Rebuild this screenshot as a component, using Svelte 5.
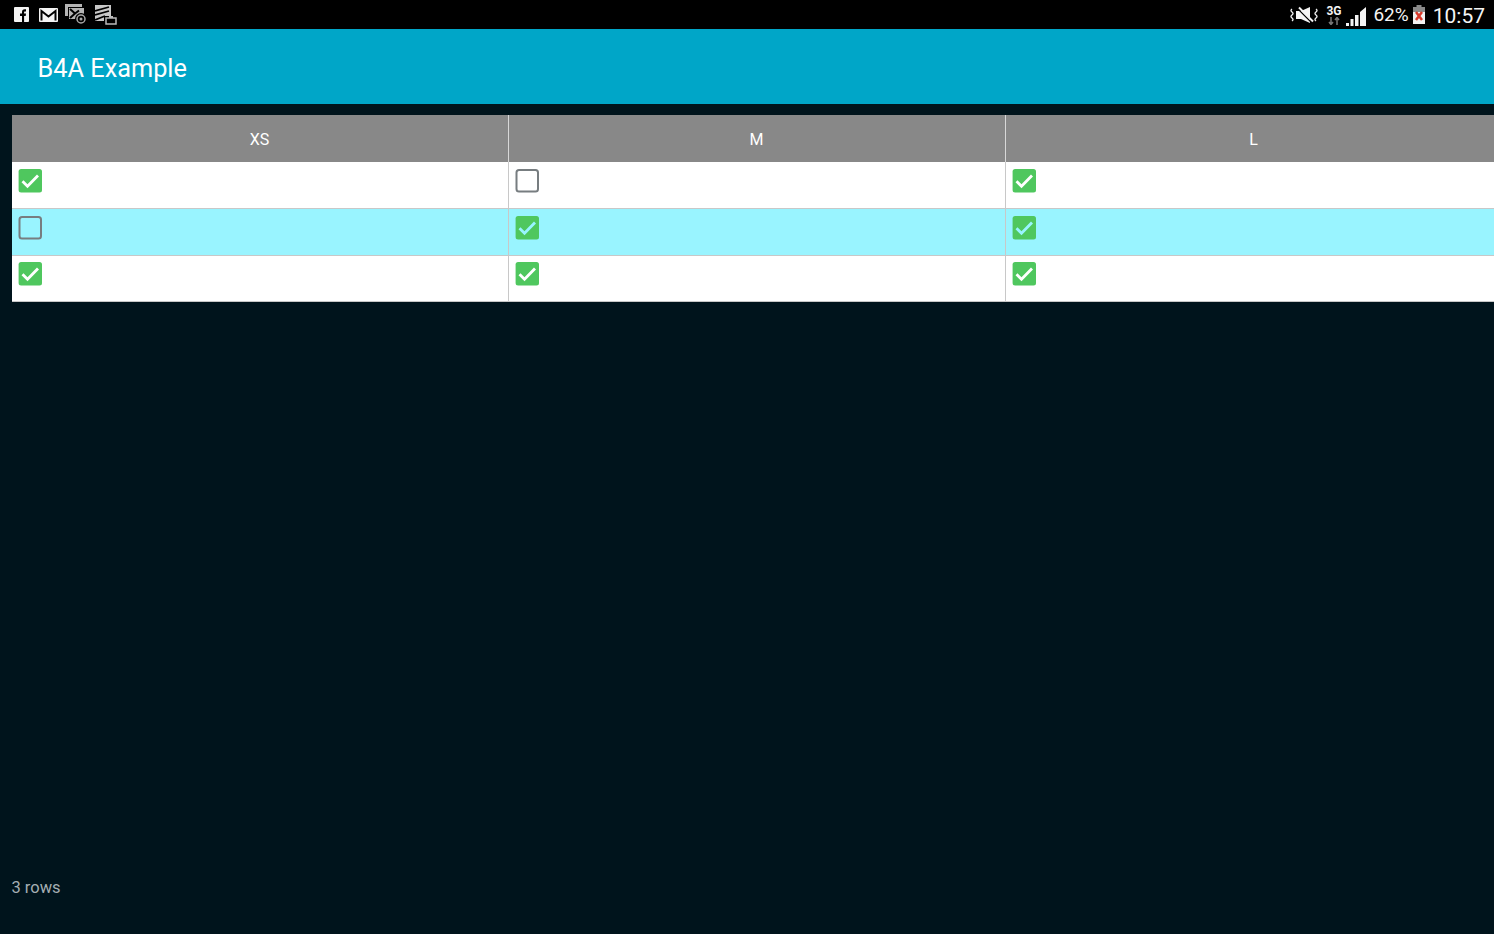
<script>
  const columns = ["XS", "M", "L"];
  const rows = [
    [true, false, true],
    [false, true, true],
    [true, true, true],
  ];
</script>

<div class="screen">
  <div class="status-bar">
    <div class="notif-icons">
      <svg class="fb" width="15" height="15" viewBox="0 0 15 15">
        <rect width="15" height="15" rx="1" fill="#f4f4f4" />
        <path d="M8 15V9H6V6.600h2V5c0-1.900 1-2.800 2.700-2.800h1.300v2.300h-1c-.7 0-.9.300-.9.900v1.200h1.900l-.3 2.400h-1.600v6z" fill="#000" />
      </svg>
      <svg class="mail" width="19" height="14" viewBox="0 0 19 14">
        <rect width="19" height="14" rx="1" fill="#f4f4f4" />
        <path d="M2.500 12.500V3l7 5.500 7-5.500v9.500" fill="none" stroke="#000" stroke-width="2" />
      </svg>
      <svg class="msg" width="22" height="21" viewBox="0 0 22 21">
        <path d="M0 0h17v3H3v9H0z" fill="#b5b5b5" />
        <rect x="4" y="4" width="15" height="11" fill="#b5b5b5" />
        <path d="M5 5l5 4.500 4-3M5 14l5-4.500" fill="none" stroke="#000" stroke-width="2" />
        <circle cx="16" cy="15" r="6" fill="#000" />
        <circle cx="16" cy="15" r="4" fill="none" stroke="#a8a8a8" stroke-width="1.500" />
        <circle cx="16" cy="15" r="1.500" fill="#a8a8a8" />
      </svg>
      <svg class="tasks" width="22" height="20" viewBox="0 0 22 20">
        <rect x="0" y="0" width="16" height="16" fill="#c8c8c8" />
        <path d="M0 6l14-4M0 10l14-4M0 15l10-4" stroke="#000" stroke-width="1.800" fill="none" />
        <rect x="9" y="11" width="13" height="9" fill="#000" />
        <rect x="11" y="13" width="10" height="6" fill="#000" stroke="#bbb" stroke-width="1.500" />
        <rect x="14" y="11" width="4" height="2" fill="#bbb" />
      </svg>
    </div>
    <div class="sys-icons">
      <svg class="mute" width="28" height="18" viewBox="0 0 28 18">
        <path d="M2 3q-2 1.500 0 3t0 3 0 3 0 3M26 3q2 1.500 0 3t0 3 0 3 0 3" fill="none" stroke="#eee" stroke-width="1.400" />
        <path d="M6 5h5l9-4v16L11 13H6z" fill="#f4f4f4" />
        <path d="M7 2l14 14" stroke="#000" stroke-width="1.300" />
        <path d="M9 1.500l14 14" stroke="#f4f4f4" stroke-width="2" />
      </svg>
      <div class="net">
        <span>3G</span>
        <svg width="14" height="8" viewBox="0 0 14 8">
          <path d="M4 0v7M2 5l2 2.500L6 5M10 8V1M8 3l2-2.500L12 3" fill="none" stroke="#777" stroke-width="1.500" />
        </svg>
      </div>
      <svg class="signal" width="20" height="19" viewBox="0 0 20 19">
        <path d="M0 19h3v-3H0zM4.500 19h3v-7h-3zM9 19h3.500V8H9zM14 19h6V0l-6 5z" fill="#f4f4f4" />
      </svg>
      <span class="pct">62%</span>
      <svg class="battery" width="12" height="19" viewBox="0 0 12 19">
        <rect x="3.500" y="0" width="5" height="3" fill="#8a8a8a" />
        <rect x="0" y="2" width="12" height="17" fill="#f2f2f2" />
        <rect x="0" y="2" width="12" height="5" fill="#8a8a8a" />
        <path d="M3 7l6 8M9 7l-6 8" stroke="#d9392b" stroke-width="2.500" />
      </svg>
      <span class="clock">10:57</span>
    </div>
  </div>

  <header class="toolbar">B4A Example</header>

  <main class="content">
    <div class="table">
      <div class="row head">
        {#each columns as col}
          <div class="cell">{col}</div>
        {/each}
      </div>
      {#each rows as row, i}
        <div class="row" class:odd={i % 2 === 1}>
          {#each row as checked}
            <div class="cell">
              {#if checked}
                <svg class="box" width="24" height="24" viewBox="0 0 24 24">
                  <rect x=".6" width="23.400" height="23.500" rx="2.500" fill="#4fc75e" />
                  <path class="tick" d="M4.500 12.300l5 5 10.500-10.800" fill="none" stroke-width="2.800" />
                </svg>
              {:else}
                <svg class="box" width="24" height="24" viewBox="0 0 24 24">
                  <rect x="1.500" y="1" width="21.500" height="21.500" rx="2.500" fill="none" stroke="#777d80" stroke-width="2" />
                </svg>
              {/if}
            </div>
          {/each}
        </div>
      {/each}
    </div>
    <div class="row-count">3 rows</div>
  </main>
</div>

<style>
  :global(body) {
    background: #00141c;
  }

  .screen {
    display: flex;
    flex-direction: column;
    height: 934px;
    overflow: hidden;
    font-family: Roboto, "Liberation Sans", sans-serif;
    background: #00141c;
  }

  .status-bar {
    flex: 0 0 29px;
    display: flex;
    justify-content: space-between;
    align-items: center;
    background: #000;
    color: #f4f4f4;
  }

  .notif-icons {
    display: flex;
    align-items: center;
    padding-left: 14px;
  }

  .fb {
    margin-right: 10px;
  }

  .mail {
    margin-right: 7px;
  }

  .msg {
    margin-right: 8px;
  }

  .sys-icons {
    display: flex;
    align-items: center;
    padding-right: 9px;
  }

  .mute {
    margin-right: 7px;
  }

  .net {
    display: flex;
    flex-direction: column;
    align-items: center;
    width: 17px;
    margin-right: 4px;
    font-size: 12px;
    font-weight: 700;
    line-height: 12px;
  }

  .signal {
    margin-right: 7px;
    margin-top: 4px;
  }

  .pct {
    font-size: 19px;
    margin-right: 4px;
  }

  .battery {
    margin-right: 8px;
  }

  .clock {
    font-size: 21px;
    margin-top: 2px;
  }

  .toolbar {
    flex: 0 0 75px;
    display: flex;
    align-items: center;
    padding: 4px 0 0 37.500px;
    box-sizing: border-box;
    background: #00a6c8;
    color: #fff;
    font-size: 25.300px;
  }

  .content {
    flex: 1;
    display: flex;
    flex-direction: column;
    justify-content: space-between;
    padding: 11px 0 37px 12px;
    min-height: 0;
  }

  .table {
    overflow: hidden;
  }

  .row {
    display: grid;
    grid-template-columns: repeat(3, 497px);
    height: 47px;
    box-sizing: border-box;
    border-bottom: 1px solid #c8c8c8;
    background: #fff;
    --tick: #fff;
  }

  .row:last-child {
    height: 46px;
  }

  .row:last-child .cell {
    padding-top: 6px;
  }

  .row.odd {
    background: #99f4ff;
    --tick: #99f4ff;
  }

  .row.head {
    background: #888;
    border-bottom: none;
    color: #fff;
    font-size: 16px;
  }

  .row.head .cell {
    display: flex;
    justify-content: center;
    align-items: center;
    padding: 1px 1px 0 0;
    border-right-color: #d8d8d8;
  }

  .cell {
    box-sizing: border-box;
    border-right: 1px solid #c8c8c8;
    padding: 7px 0 0 6px;
  }

  .box {
    display: block;
  }

  .tick {
    stroke: var(--tick);
  }

  .row-count {
    margin-left: -0.500px;
    color: #a4aeb2;
    font-size: 16.500px;
    line-height: 19px;
  }
</style>
